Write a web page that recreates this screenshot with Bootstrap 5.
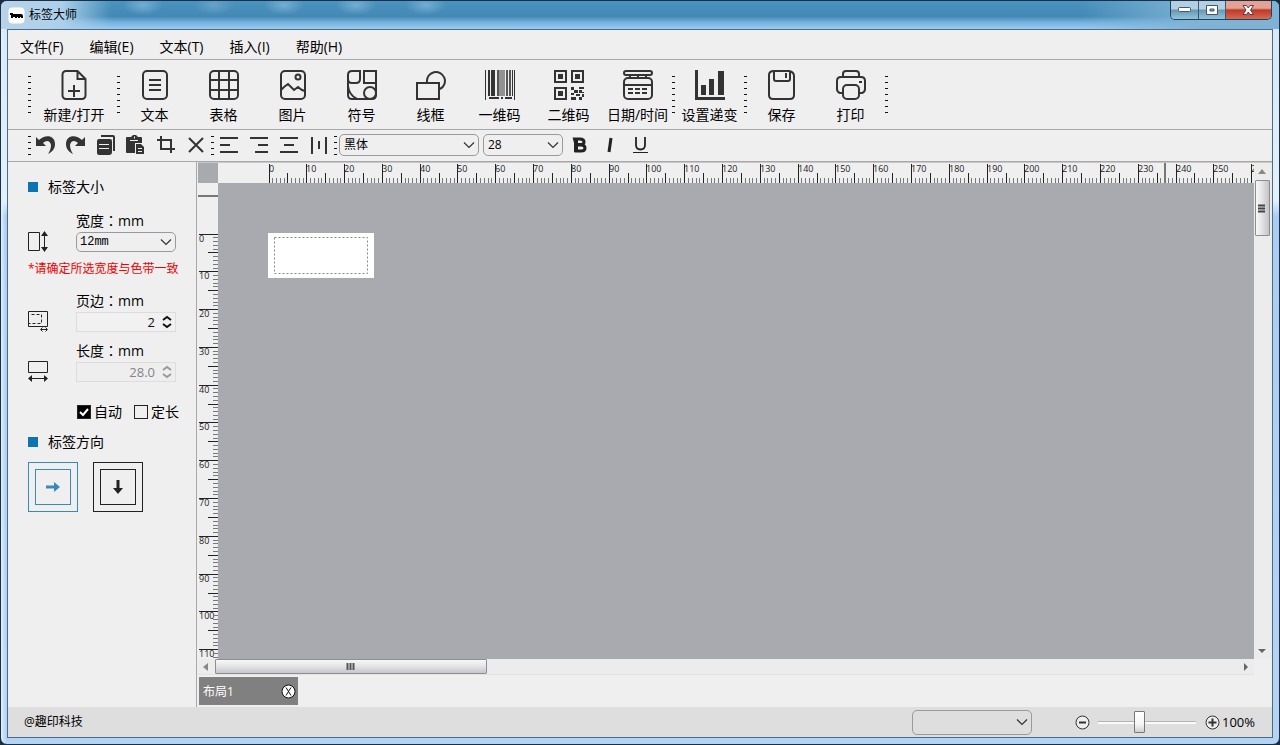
<!DOCTYPE html>
<html lang="zh-CN">
<head>
<meta charset="utf-8">
<meta name="viewport" content="width=device-width, initial-scale=1">
<title>标签大师</title>
<link href="https://cdn.jsdelivr.net/npm/bootstrap@5.3.0/dist/css/bootstrap.min.css" rel="stylesheet">
<style>
  :root { --line: #a8a8a8; --ink: #333; --panel: #efefef; --accent: #0c74b0; }
  body { font-family: "Open Sans", "Noto Sans CJK SC", sans-serif; font-size: 14px; line-height: 20px; color: #000; background: #1a2c40; }
  svg { display: block; flex: none; }
  .win { border: 1px solid #1b2f45; border-radius: 7px; padding: 0 6px 6px;
    background: linear-gradient(90deg, #e0effc 0, #ffffff00 5px), linear-gradient(180deg, #d5e6f6 0, #e4f1fc 200px, #a9cdf2 215px, #b4d4f5 100%); overflow: hidden; }
  .titlebar { height: 28px; margin: 0 -6px; padding: 0 7px; position: relative;
    background:
      radial-gradient(ellipse 20px 10px at 142px 4px, #74add3, #74add300),
      radial-gradient(ellipse 20px 10px at 213px 4px, #68a1c9, #68a1c900),
      radial-gradient(ellipse 20px 10px at 283px 4px, #74add3, #74add300),
      radial-gradient(ellipse 20px 10px at 355px 4px, #74add3, #74add300),
      radial-gradient(ellipse 20px 10px at 425px 4px, #74add3, #74add300),
      linear-gradient(90deg, #b9d3e9 0, #acd0ea 60px, #acd0ea00 110px, #7fb3d600 1080px, #7fb3d6 1200px),
      linear-gradient(180deg, #4a93c0 0, #4389b4 55%, #72b0dc 75%, #9dcbf0 100%); }
  .caption { font-size: 12px; padding-top: 4px; }
  .winctl { height: 19px; border: 1px solid #24415c; border-top: 0; border-radius: 0 0 5px 5px; overflow: hidden; }
  .winctl button { border: 0; border-left: 1px solid #3a5a75; width: 27px; padding: 0; background: linear-gradient(#b3d0e2 45%, #6597b4 50%, #92c5dc); display: flex; align-items: center; justify-content: center; }
  .winctl button:first-child { border-left: 0; }
  .winctl .quit { width: 46px; background: linear-gradient(#e4a295 40%, #bd3a28 50%, #d66a52); }
  .client { border: 1px solid #4d6a86; background: var(--panel); min-height: 0; }
  .menus { height: 30px; border-bottom: 1px solid var(--line); padding: 3px 12px 0; gap: 26px; }
  .menus a { color: #000; text-decoration: none; line-height: 28px; }
  .tools, .format { border-bottom: 1px solid var(--line); padding-left: 20px; }
  .tools { height: 70px; }
  .format { height: 32px; }
  .grip { width: 3px; flex: none; background: repeating-linear-gradient(#111 0 1px, transparent 1px 6px); height: 38px; margin-top: 16px; }
  .format .grip { height: 19px; margin-top: 6px; }
  .tool { border: 0; background: none; width: 69px; padding: 10px 0 0; gap: 5px; white-space: nowrap; color: #000; }
  .tool.wide { width: 86px; }
  .mini { border: 0; background: none; width: 30px; height: 30px; padding: 0; display: flex; align-items: center; justify-content: center; }
  .combo { appearance: none; border: 1px solid #9a9a9a; border-radius: 5px; padding: 0 4px; color: #000; font-size: 12px; line-height: 18px;
    background: #efefef url("data:image/svg+xml,%3Csvg xmlns='http://www.w3.org/2000/svg' width='12' height='8'%3E%3Cpath d='M1 1.5l5 5 5-5' fill='none' stroke='%23333' stroke-width='1.2'/%3E%3C/svg%3E") no-repeat right 3px center; }
  .format .combo { height: 22px; margin-top: 4px; }
  .family { width: 140px; margin: 0 4px 0 2px; }
  .points { width: 80px; margin-right: 2px; }
  .side { width: 189px; flex: none; border-right: 1px solid var(--line); padding: 15px 0 0 20px; }
  .head { gap: 10px; }
  .head i { width: 10px; height: 10px; background: var(--accent); }
  .field { gap: 28px; }
  .field label { display: block; height: 20px; line-height: 18px; }
  .field .ctl { width: 100px; height: 20px; display: block; }
  .tape { font-family: "Liberation Mono", monospace; padding-left: 3px; }
  .colon { font-family: "Noto Sans CJK JP", sans-serif; line-height: 1; }
  .num { border: 1px solid #ddd; background: #f1f1f1; text-align: right; padding: 0 20px 0 4px; font-size: 13px; appearance: textfield; -moz-appearance: textfield; color: #111; }
  .num:disabled { color: #858585; background: #eee; }
  .num::-webkit-inner-spin-button { display: none; }
  .spin { position: absolute; right: 4px; top: 3px; }
  .warn { color: #f00000; font-size: 12px; white-space: nowrap; }
  .tick { appearance: none; width: 14px; height: 14px; border: 1px solid #222; background: #fff0; margin: 0; }
  .tick:checked { background: #000 url("data:image/svg+xml,%3Csvg xmlns='http://www.w3.org/2000/svg' width='12' height='12'%3E%3Cpath d='M2 6l3 3 5-6' fill='none' stroke='%23fff' stroke-width='2'/%3E%3C/svg%3E") center no-repeat; }
  .dir { width: 50px; height: 50px; padding: 6px; border: 1px solid #222; background: none; color: #222; }
  .dir span { display: flex; height: 100%; align-items: center; justify-content: center; border: 1px solid; }
  .dir.on { color: #3a89b8; border-color: #3a89b8; }
  .work { padding: 1px 0 2px 1px; min-width: 0; }
  .board { display: grid; grid-template: 20px minmax(0, 1fr) 16px / 20px minmax(0, 1fr) 18px; min-height: 0; border-top: 1px solid #c8c8c8; margin-top: -1px; }
  .grey { background: #a9aaaf; }
  .canvas { padding: 50px; overflow: hidden; }
  .paper { width: 106px; height: 45px; padding: 4px 6px; background: #fff; }
  .rule { font-size: 9px; width: 100%; height: 100%; min-width: 0; min-height: 0; overflow: hidden; }
  .rule text { fill: #222; }
  .vbar, .hbar { background: #ececec; display: flex; align-items: center; }
  .vbar { grid-row: 1 / 3; grid-column: 3; flex-direction: column; padding: 6px 2px 6px 0; }
  .hbar { grid-row: 3; grid-column: 1 / 3; padding: 0 6px 0 5px; border-bottom: 1px solid #e2e2e2; }
  .thumb { border: 1px solid #8e8e92; border-radius: 1px; display: flex; align-items: center; justify-content: center; flex: none; }
  .vbar .thumb { width: 15px; height: 56px; margin-top: 6px; background: linear-gradient(90deg, #f7f7f7, #e4e4e6 45%, #c3c3c9); }
  .hbar .thumb { width: 26%; height: 15px; margin-left: 7px; background: linear-gradient(#f7f7f7, #e6e6e8 45%, #c6c6cb); }
  .sheet { width: 99px; height: 28px; margin: 2px 0 0 1px; padding: 1px 2px 0 4px; background: #808080; color: #fff; font-size: 12px; }
  .sheet button { border: 0; padding: 0; background: none; }
  .status { height: 30px; background: #dedede; padding: 0 17px 0 16px; font-size: 12px; flex: none; }
  .status .combo { width: 120px; height: 25px; background-color: #dedede; margin-right: 43px; }
  .status button { border: 0; background: none; padding: 0; }
  .zoomer { appearance: none; width: 98px; height: 22px; background: linear-gradient(#b4b4b4, #b4b4b4) 0 10px / 100% 1px no-repeat, linear-gradient(#fafafa, #fafafa) 0 11px / 100% 2px no-repeat; margin: 0 9px 0 8px; }
  .zoomer::-webkit-slider-thumb { appearance: none; width: 11px; height: 22px; border: 1px solid #777; border-radius: 1px; background: linear-gradient(#fff, #f6f6f6 60%, #d0d0d0); }
  .percent { font-size: 13px; margin-left: 2px; }
</style>
</head>
<body>
<div class="win vh-100 d-flex flex-column">
  <header class="titlebar d-flex align-items-start justify-content-between flex-shrink-0">
    <div class="caption d-flex align-items-center gap-1">
      <svg width="17" height="17" viewBox="0 0 17 17"><rect width="16" height="16" x=".5" y=".5" rx="4" fill="#fff"/><path d="M2 6h3v1h8q2 0 2 2v2h-2v-1h-1v1h-2v-1H9v1H7v-1H5v1H3V8H2z" fill="#000"/></svg>
      <span>标签大师</span>
    </div>
    <div class="winctl d-flex">
      <button aria-label="最小化"><svg width="13" height="6"><rect x=".5" y=".5" width="12" height="4" rx="1" fill="#fff" stroke="#45566b"/></svg></button>
      <button aria-label="最大化"><svg width="13" height="11"><path d="M.5.5h11v9H.5zM4 4v2h4V4z" fill="#fff" fill-rule="evenodd" stroke="#45566b"/></svg></button>
      <button class="quit" aria-label="关闭"><svg width="13" height="11"><path d="M1 .5h3.500l1.800 2.500L8 .5h3.500L8.500 5l3 4.500H8L6.300 7 4.500 9.500H1L4 5z" fill="#fff" stroke="#5d3a48"/></svg></button>
    </div>
  </header>

  <div class="client flex-grow-1 d-flex flex-column">
    <nav class="menus d-flex flex-shrink-0" aria-label="菜单">
      <a href="#">文件(F)</a><a href="#">编辑(E)</a><a href="#">文本(T)</a><a href="#">插入(I)</a><a href="#">帮助(H)</a>
    </nav>

    <div class="tools d-flex align-items-start flex-shrink-0" role="toolbar" aria-label="插入工具">
      <span class="grip"></span>
      <button class="tool wide d-flex flex-column align-items-center"><svg width="30" height="30" fill="none" stroke="#333" stroke-width="2"><path d="M18.500 1H7a3.500 3.500 0 0 0-3.500 3.500v21A3.500 3.500 0 0 0 7 29h16a3.500 3.500 0 0 0 3.500-3.500V9zM18.500 1v8h8M15 15v12M9 21h12"/></svg>新建/打开</button>
      <span class="grip"></span>
      <button class="tool d-flex flex-column align-items-center"><svg width="30" height="30" fill="none" stroke="#333" stroke-width="2"><rect x="3" y="1" width="24" height="28" rx="4"/><path d="M9 10h12M9 15h12M9 20h12"/></svg>文本</button>
      <button class="tool d-flex flex-column align-items-center"><svg width="30" height="30" fill="none" stroke="#333" stroke-width="2"><rect x="1" y="1" width="28" height="28" rx="4"/><path d="M10 1v28M20 1v28M1 10h28M1 20h28"/></svg>表格</button>
      <button class="tool d-flex flex-column align-items-center"><svg width="30" height="30" fill="none" stroke="#333" stroke-width="2"><rect x="3" y="1" width="24" height="28" rx="4"/><circle cx="20" cy="7" r="2.500"/><path d="M3 20q1-1 3-3l4-3 6 6 4-3 4 3 3 1"/></svg>图片</button>
      <button class="tool d-flex flex-column align-items-center"><svg width="30" height="30" fill="none" stroke="#333" stroke-width="2"><path d="M5 1h8v8q0 4-4 4H5q-4 0-4-4V5q0-4 4-4zM17 1h12v12H17zM1 9v16q0 4 4 4h20q4 0 4-4V12M1 16q1 9 9 13"/><circle cx="23" cy="23" r="6"/></svg>符号</button>
      <button class="tool d-flex flex-column align-items-center"><svg width="30" height="30" fill="none" stroke="#333" stroke-width="2"><path d="M11 12a9 9 0 1 1 13 7M1 13h22v16H1z"/></svg>线框</button>
      <button class="tool d-flex flex-column align-items-center"><svg width="30" height="30"><path fill="#333" d="M0 0h1v30H0zM3 0h2v26H3zM6 0h4v26H6zM27 0h1v26h-1zM29 0h1v30h-1zM4 27h10v2H4zM16 27h2v2h-2zM20 27h7v2h-7z"/><path fill="#555" d="M12 0h2v26h-2zM21 0h2v26h-2zM24 0h2v26h-2z"/><path fill="#929292" d="M14 0h6v26h-6z"/></svg>一维码</button>
      <button class="tool d-flex flex-column align-items-center"><svg width="30" height="30"><path d="M1 1h11v11H1zM18 1h11v11H18zM1 18h11v11H1z" fill="none" stroke="#333" stroke-width="2"/><path fill="#333" d="M4 4h5v5H4zM21 4h5v5h-5zM4 21h5v5H4zM17 17h3v3h-3zM20 20h4v3h-4zM25 17h5v2h-5zM25 20h3v3h-3zM17 23h3v2h-3zM22 24h4v2h-4zM28 24h2v3h-2zM17 27h5v3h-5zM25 27h3v3h-3zM28 22h2v1h-2z"/></svg>二维码</button>
      <button class="tool d-flex flex-column align-items-center"><svg width="30" height="30" fill="none" stroke="#333" stroke-width="2"><rect x="1" y="1" width="28" height="4" rx="2"/><path d="M7 5v4M15 5v4M23 5v4M1 15h28"/><rect x="1" y="8" width="28" height="21" rx="4"/><path d="M5 19h5M12 19h5M19 19h5M5 23h5M12 23h5M19 23h5"/></svg>日期/时间</button>
      <span class="grip"></span>
      <button class="tool d-flex flex-column align-items-center"><svg width="30" height="30" fill="#333"><path d="M0 0h3v27h27v3H0zM6 15h5v10H6zM14 9h5v16h-5zM23 1h6v24h-6z"/></svg>设置递变</button>
      <span class="grip"></span>
      <button class="tool d-flex flex-column align-items-center"><svg width="30" height="30" fill="none" stroke="#333" stroke-width="2"><path d="M7 1h15q5 1 5 5v19q0 4-4 4H6q-4 0-4-4V5q0-4 5-4zM7 1v8q0 2 2 2h12q2 0 2-2V1M19 3v5"/></svg>保存</button>
      <button class="tool d-flex flex-column align-items-center"><svg width="30" height="30" fill="none" stroke="#333" stroke-width="2"><path d="M7 7V4q0-3 3-3h10q3 0 3 3v3M7 23H4q-3-1-3-4v-8q0-4 4-4h20q4 0 4 4v8q0 3-3 4h-3M23 12h3"/><rect x="7" y="15" width="16" height="14" rx="4"/></svg>打印</button>
      <span class="grip"></span>
    </div>

    <div class="format d-flex align-items-start flex-shrink-0" role="toolbar" aria-label="格式工具">
      <span class="grip"></span>
      <button class="mini" aria-label="撤销"><svg width="20" height="20" fill="#333"><path d="M0 2l3 3C9-1 19 0 19 9c0 5-3 8-7 10 2-3 3-6 3-9-1-5-5-5-8-2l3 3H0z"/></svg></button>
      <button class="mini" aria-label="重做"><svg width="20" height="20" fill="#333"><path d="M19 2l-3 3C10-1 0 0 0 9c0 5 3 8 7 10-2-3-3-6-3-9 1-5 5-5 8-2l-3 3h10z"/></svg></button>
      <button class="mini" aria-label="复制"><svg width="20" height="20" fill="#333"><path d="M5 0h12q2 0 2 2v14h-2V2H5zM3 4h11q2 0 2 2v11q0 3-3 3H3q-2 0-2-2V6q0-2 2-2z"/><path d="M3 9.500h10M3 13.500h10" stroke="#efefef"/></svg></button>
      <button class="mini" aria-label="粘贴"><svg width="20" height="20"><path fill="#333" d="M1 2h4l2-2h3l2 2h3q1 0 1 1v5H9v10H1q-1 0-1-1V3q0-1 1-1zM10 9h5l3 3v7h-8z"/><path d="M4 5.500h8M8.500 1.500v2M12 13.500h4M12 16.500h4" stroke="#efefef"/></svg></button>
      <button class="mini" aria-label="裁剪"><svg width="20" height="20" fill="none" stroke="#333" stroke-width="2"><path d="M5 1v13h14M1 5h14v13"/></svg></button>
      <button class="mini" aria-label="删除"><svg width="20" height="20" stroke="#333" stroke-width="2"><path d="M3 3l14 14M17 3L3 17"/></svg></button>
      <span class="grip"></span>
      <button class="mini" aria-label="左对齐"><svg width="20" height="20" stroke="#333" stroke-width="2"><path d="M1 3h18M1 10h10M1 17h18"/></svg></button>
      <button class="mini" aria-label="右对齐"><svg width="20" height="20" stroke="#333" stroke-width="2"><path d="M1 3h18M9 10h10M6 17h13"/></svg></button>
      <button class="mini" aria-label="居中"><svg width="20" height="20" stroke="#333" stroke-width="2"><path d="M1 3h18M5 10h10M1 17h18"/></svg></button>
      <button class="mini" aria-label="分散"><svg width="20" height="20" stroke="#333" stroke-width="2"><path d="M3 2v17M10 6v8M17 2v17"/></svg></button>
      <span class="grip"></span>
      <select class="combo family ps-1" aria-label="字体"><option>黑体</option></select>
      <select class="combo points" aria-label="字号"><option>28</option></select>
      <button class="mini" aria-label="加粗"><svg width="20" height="20"><path d="M4.500 4H10q4 0 4 3 0 2.500-3 2.500H6zM6 10h5q4 0 4 3t-4 3H4.500" fill="none" stroke="#222" stroke-width="3"/><path d="M4 3h4v14H4z" fill="#222"/></svg></button>
      <button class="mini" aria-label="斜体"><svg width="20" height="20"><path d="M11 3L9 17" stroke="#222" stroke-width="3"/></svg></button>
      <button class="mini" aria-label="下划线"><svg width="20" height="20" fill="none" stroke="#222"><path d="M6 2v8q0 4.500 4.500 4.500T15 10V2" stroke-width="1.800"/><path d="M3 17.500h15"/></svg></button>
    </div>

    <main class="d-flex flex-grow-1 overflow-hidden">
      <aside class="side">
        <div class="head d-flex align-items-center"><i></i>标签大小</div>
        <div class="field d-flex align-items-end" style="margin-top:15px">
          <svg width="20" height="21" fill="none" stroke="#222"><path d="M.5 1.500h11v18H.5zM16.500 2v17"/><path d="M13 5l3.500-5L20 5zM13 16l3.500 5 3.500-5z" fill="#222" stroke="none"/></svg>
          <div><label for="w">宽度<span class="colon" lang="ja">：</span>mm</label><select id="w" class="combo ctl tape"><option>12mm</option></select></div>
        </div>
        <div class="warn" style="margin-top:7px">*请确定所选宽度与色带一致</div>
        <div class="field d-flex align-items-end" style="margin-top:13px">
          <svg width="20" height="21" fill="none" stroke="#222"><path d="M.5 .5h19v15H.5z"/><path d="M3.500 3.500h10v9H1" stroke-dasharray="3 2"/><path d="M13 18.500h6M14.500 16.500l-2 2 2 2M17.500 16.500l2 2-2 2"/></svg>
          <div><label for="m">页边<span class="colon" lang="ja">：</span>mm</label><div class="position-relative"><input id="m" type="number" class="num ctl" value="2"><svg class="spin" width="10" height="14" fill="none" stroke="#111" stroke-width="2"><path d="M1 5l4-3 4 3M1 9l4 3 4-3"/></svg></div></div>
        </div>
        <div class="field d-flex align-items-end" style="margin-top:10px">
          <svg width="20" height="21" fill="none" stroke="#222"><path d="M.5 .5h19v11H.5zM2 17.500h16"/><path d="M4 14l-4 3.500L4 21zM16 14l4 3.500-4 3.500z" fill="#222" stroke="none"/></svg>
          <div><label for="l">长度<span class="colon" lang="ja">：</span>mm</label><div class="position-relative"><input id="l" type="number" step="0.1" class="num ctl" value="28.0" disabled><svg class="spin" width="10" height="14" fill="none" stroke="#999" stroke-width="2"><path d="M1 5l4-3 4 3M1 9l4 3 4-3"/></svg></div></div>
        </div>
        <div class="d-flex" style="margin-top:20px;padding-left:49px;gap:12px">
          <label class="d-flex align-items-center" style="gap:3px"><input type="checkbox" class="tick" checked>自动</label>
          <label class="d-flex align-items-center" style="gap:3px"><input type="checkbox" class="tick">定长</label>
        </div>
        <div class="head d-flex align-items-center" style="margin-top:10px"><i></i>标签方向</div>
        <div class="d-flex" style="margin-top:10px;gap:15px">
          <button class="dir on" aria-label="横向"><span><svg width="16" height="12"><path d="M1 4.500h8V1l6 5-6 5V7.500H1z" fill="currentColor"/></svg></span></button>
          <button class="dir" aria-label="纵向"><span><svg width="12" height="16"><path d="M4.500 1v8H1l5 6 5-6H7.500V1z" fill="currentColor"/></svg></span></button>
        </div>
      </aside>

      <section class="work flex-grow-1 d-flex flex-column">
        <div class="board flex-grow-1">
          <div class="grey"></div>
          <svg id="hr" class="rule" shape-rendering="crispEdges"></svg>
          <svg id="vr" class="rule" shape-rendering="crispEdges"></svg>
          <div class="canvas grey"><div class="paper"><svg width="94" height="37"><rect x=".5" y=".5" width="93" height="36" fill="none" stroke="#888" stroke-dasharray="2 2"/></svg></div></div>
          <div class="vbar">
            <svg width="8" height="5"><path d="M4 0l4 5H0z" fill="#888"/></svg>
            <div class="thumb"><svg width="8" height="9"><path d="M0 1.500h7M0 4.500h7M0 7.500h7" stroke="#444" stroke-width="2"/></svg></div>
            <svg class="mt-auto" width="8" height="4"><path d="M4 4l4-4H0z" fill="#666"/></svg>
          </div>
          <div class="hbar">
            <svg width="5" height="8"><path d="M0 4l5-4v8z" fill="#888"/></svg>
            <div class="thumb"><svg width="9" height="8"><path d="M1.500 0v7M4.500 0v7M7.500 0v7" stroke="#555" stroke-width="2"/></svg></div>
            <svg class="ms-auto" width="4" height="8"><path d="M4 4L0 0v8z" fill="#666"/></svg>
          </div>
        </div>
        <div class="sheet d-flex align-items-center justify-content-between flex-shrink-0">布局1
          <button aria-label="关闭布局1"><svg width="15" height="15"><circle cx="7.500" cy="7.500" r="6.500" fill="#fff" stroke="#111"/><path d="M5 3.500l5 8M10 3.500l-5 8" stroke="#111"/></svg></button>
        </div>
      </section>
    </main>

    <footer class="status d-flex align-items-center">
      <span class="me-auto">@趣印科技</span>
      <select class="combo" aria-label="打印机"><option></option></select>
      <button aria-label="缩小"><svg width="15" height="15" fill="none" stroke="#333"><circle cx="7.500" cy="7.500" r="6.500" fill="#eee"/><path d="M4 7.500h7" stroke-width="2"/></svg></button>
      <input type="range" class="zoomer" aria-label="缩放" min="0" max="100" value="41">
      <button aria-label="放大"><svg width="15" height="15" fill="none" stroke="#333"><circle cx="7.500" cy="7.500" r="6.500" fill="#eee"/><path d="M3.500 7.500h8M7.500 3.500v8" stroke-width="2"/></svg></button>
      <span class="percent">100%</span>
    </footer>
  </div>
</div>
<script src="https://cdn.jsdelivr.net/npm/bootstrap@5.3.0/dist/js/bootstrap.bundle.min.js"></script>
<script>
  // Rulers: one tick per millimetre at 96 dpi, a label every ten.
  const PX_PER_MM = 96 / 25.4, ORIGIN = 51;
  function drawRuler(svg, horizontal, cursor) {
    const length = horizontal ? svg.clientWidth : svg.clientHeight;
    let out = '';
    for (let mm = 0; ORIGIN + mm * PX_PER_MM < length; mm++) {
      const p = Math.floor(ORIGIN + mm * PX_PER_MM);
      const major = mm % 10 === 0, size = major ? 19 : mm % 5 === 0 ? 10 : 5;
      const fill = mm % 5 === 0 ? '#222' : '#777';
      out += horizontal
        ? `<rect x="${p}" y="${20 - size}" width="1" height="${size}" fill="${fill}"/>`
        : `<rect x="${20 - size}" y="${p}" width="${size}" height="1" fill="${fill}"/>`;
      if (major) out += horizontal
        ? `<text x="${p}" y="9">${mm}</text>`
        : `<text x="1" y="${p + 8}">${mm}</text>`;
    }
    out += horizontal
      ? `<rect x="${cursor}" y="0" width="2" height="20" fill="#777"/>`
      : `<rect x="0" y="${cursor}" width="20" height="2" fill="#777"/>`;
    svg.innerHTML = out;
  }
  function drawRulers() {
    drawRuler(document.getElementById('hr'), true, 946);
    drawRuler(document.getElementById('vr'), false, 12);
  }
  drawRulers();
  addEventListener('resize', drawRulers);
</script>
</body>
</html>
